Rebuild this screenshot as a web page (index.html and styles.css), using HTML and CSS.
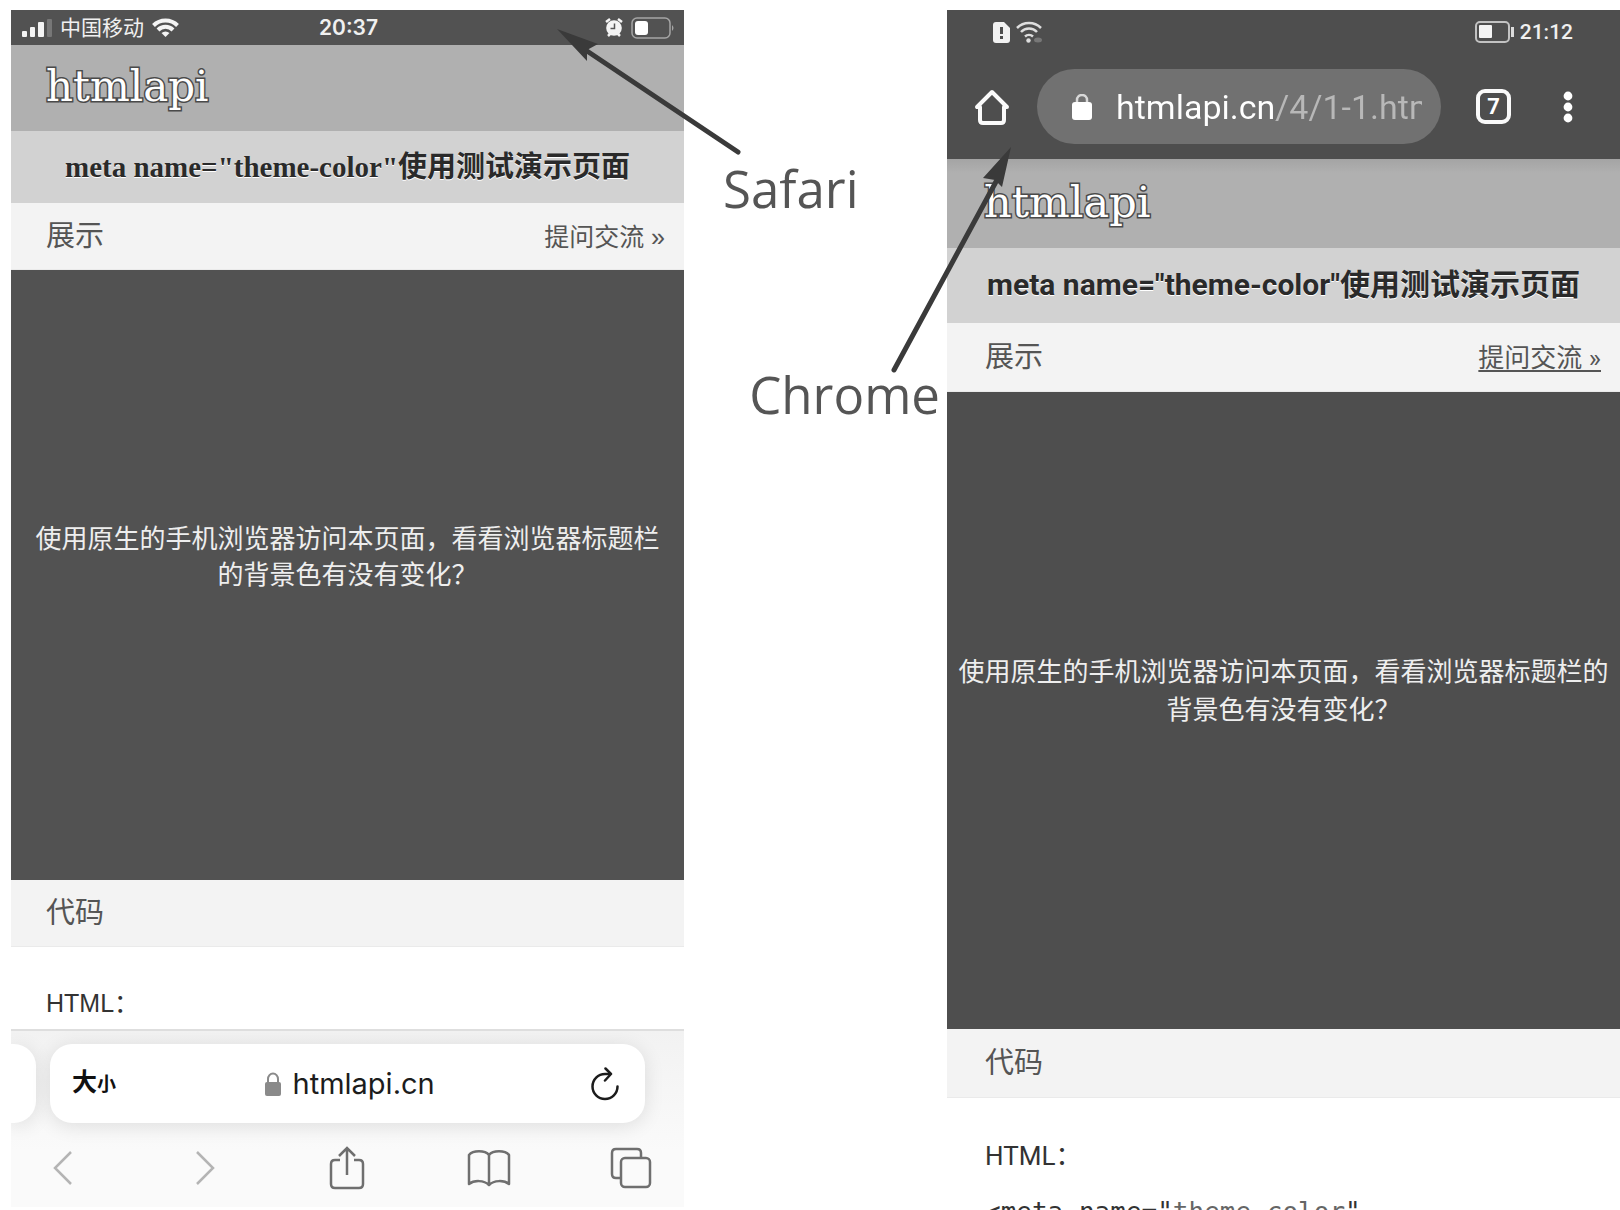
FILE: index.html
```html
<!DOCTYPE html>
<html lang="zh-CN">
<head>
    <meta charset="UTF-8">
    <title>meta name="theme-color"使用测试演示页面</title>
    <meta name="viewport" content="width=device-width, initial-scale=1">
    <link rel="stylesheet" href="styles.css">
</head>
<body>
    <main class="compare">
        <!-- Safari on iOS -->
        <section class="phone safari">
            <div class="status">
                <div class="status-side">
                    <svg width="30" height="18" viewBox="0 0 30 18" fill="#f4f4f4">
                        <rect x="0" y="12" width="5" height="6" rx="1"/>
                        <rect x="8" y="8" width="5" height="10" rx="1"/>
                        <rect x="16" y="3" width="6" height="15" rx="1"/>
                        <rect x="25" y="0" width="5" height="18" rx="1" fill="#777"/>
                    </svg>
                    <span class="carrier">中国移动</span>
                    <svg width="27" height="19" viewBox="0 0 27 19" fill="none" stroke="#f4f4f4" stroke-width="4">
                        <path d="M1.500 7.500a17 17 0 0 1 24 0"/>
                        <path d="M6 12a10.500 10.500 0 0 1 15 0"/>
                        <path d="M13.500 19l-4-4a6 6 0 0 1 8 0z" fill="#f4f4f4" stroke="none"/>
                    </svg>
                </div>
                <time class="clock">20:37</time>
                <div class="status-side status-end">
                    <svg width="18" height="19" viewBox="0 0 18 19">
                        <path d="M1 4l4-3M17 4l-4-3M3 18l3-3M15 18l-3-3" stroke="#f4f4f4" stroke-width="2.500"/>
                        <circle cx="9" cy="10" r="7.800" fill="#f4f4f4"/>
                        <path d="M9.500 5.500v5h-4" fill="none" stroke="#555" stroke-width="1.500"/>
                    </svg>
                    <svg width="44" height="22" viewBox="0 0 44 22">
                        <rect x="1" y="1" width="38" height="20" rx="5" fill="none" stroke="#a5a5a5" stroke-width="1.500"/>
                        <rect x="4" y="4" width="13" height="14" rx="3" fill="#fff"/>
                        <path d="M41 8q3 3 0 6z" fill="#a5a5a5"/>
                    </svg>
                </div>
            </div>
            <header class="site-header"><a class="logo" href="#">htmlapi</a></header>
            <h1 class="title">meta name="theme-color"使用测试演示页面</h1>
            <div class="bar">
                <h2 class="bar-title">展示</h2>
                <a class="ask" href="#">提问交流 »</a>
            </div>
            <div class="demo">
                <p class="demo-text">使用原生的手机浏览器访问本页面，看看浏览器标题栏的背景色有没有变化？</p>
            </div>
            <div class="bar"><h2 class="bar-title">代码</h2></div>
            <div class="code"><p class="lang">HTML：</p></div>
            <footer class="safari-ui">
                <div class="tabs-strip">
                    <div class="prev-tab"></div>
                    <div class="address">
                        <button class="text-size" type="button"><span>大</span><small>小</small></button>
                        <label class="address-field">
                            <svg width="18" height="24" viewBox="0 0 18 24" role="img" aria-label="Address">
                                <path d="M4 11V7a5 5.500 0 0 1 10 0v4" fill="none" stroke="#8a8a8a" stroke-width="2"/>
                                <rect x="1" y="10" width="16" height="14" rx="2" fill="#8a8a8a"/>
                            </svg>
                            <input class="url" type="text" value="htmlapi.cn">
                        </label>
                        <button class="icon-button" type="button" aria-label="Reload">
                            <svg width="28" height="34" viewBox="0 0 28 34" fill="none" stroke="#1c1c1c" stroke-width="2.500" stroke-linecap="round" stroke-linejoin="round">
                                <path d="M26.500 19.500a12.500 12.500 0 1 1-12.500-12.500h5"/>
                                <path d="M14.500 1.500l5.500 5.500-6 6.500"/>
                            </svg>
                        </button>
                    </div>
                </div>
                <nav class="safari-nav">
                    <button class="icon-button" type="button" aria-label="Back">
                        <svg width="20" height="34" viewBox="0 0 20 34" fill="none" stroke="#b4b4b4" stroke-width="2.500"><path d="M18 1L2 17l16 16"/></svg>
                    </button>
                    <button class="icon-button" type="button" aria-label="Forward">
                        <svg width="20" height="34" viewBox="0 0 20 34" fill="none" stroke="#b4b4b4" stroke-width="2.500"><path d="M2 1l16 16L2 33"/></svg>
                    </button>
                    <button class="icon-button" type="button" aria-label="Share">
                        <svg width="36" height="44" viewBox="0 0 36 44" fill="none" stroke="#6f6f6f" stroke-width="2.500">
                            <path d="M11 14H6q-4 0-4 4v20q0 4 4 4h24q4 0 4-4V18q0-4-4-4h-5M18 29V2M10 10l8-8 8 8"/>
                        </svg>
                    </button>
                    <button class="icon-button" type="button" aria-label="Bookmarks">
                        <svg width="44" height="38" viewBox="0 0 44 38" fill="none" stroke="#6f6f6f" stroke-width="2.500" stroke-linejoin="round">
                            <path d="M22 36C17 31 7 31 2 35V6C6 1 18 1 22 6C26 1 38 1 42 6V35C37 31 27 31 22 36zM22 6v30"/>
                        </svg>
                    </button>
                    <button class="icon-button" type="button" aria-label="Tabs">
                        <svg width="42" height="42" viewBox="0 0 42 42" fill="none" stroke="#6f6f6f" stroke-width="2.500">
                            <path d="M11 31H6q-4 0-4-4V6q0-4 4-4h21q4 0 4 4v5"/>
                            <rect x="11" y="11" width="29" height="29" rx="4"/>
                        </svg>
                    </button>
                </nav>
            </footer>
        </section>

        <!-- Labels, each with an arrow to its browser chrome -->
        <aside class="notes">
            <p class="note note-safari">Safari</p>
            <p class="note note-chrome">Chrome</p>
            <svg class="arrows" width="600" height="400" viewBox="0 0 600 400">
                <g stroke="#3a3a3a" stroke-width="5" stroke-linecap="round">
                    <path d="M346 152L192 49"/>
                    <path d="M502 370L606 178"/>
                </g>
                <g fill="#3a3a3a">
                    <path d="M165 29L206 44L195 50L195 61Z"/>
                    <path d="M619 147L610 187L603 180L591 178Z"/>
                </g>
            </svg>
        </aside>

        <!-- Chrome on Android -->
        <section class="phone chrome">
            <div class="chrome-ui">
                <div class="status">
                    <div class="status-side">
                        <svg width="17" height="21" viewBox="0 0 17 21">
                            <path d="M3 0h8l6 6v12q0 3-3 3H3q-3 0-3-3V3q0-3 3-3z" fill="#f2f2f2"/>
                            <path d="M8.500 5v7M8.500 14v3" stroke="#4e4e4e" stroke-width="3"/>
                        </svg>
                        <svg width="26" height="22" viewBox="0 0 26 22" fill="none" stroke="#dedede" stroke-width="2.500">
                            <path d="M1 7a17 17 0 0 1 24 0M5 11a11 11 0 0 1 16 0M9 15.500a6 6 0 0 1 8 0"/>
                            <circle cx="12.500" cy="19.500" r="2.200" fill="#dedede" stroke="none"/>
                            <ellipse cx="22" cy="19" rx="4" ry="2.500" fill="#777" stroke="none"/>
                        </svg>
                    </div>
                    <div class="status-side status-end">
                        <svg width="39" height="22" viewBox="0 0 39 22">
                            <rect x="1" y="1" width="33" height="20" rx="4" fill="none" stroke="#c2c2c2" stroke-width="2"/>
                            <rect x="4" y="4" width="13" height="13" rx="1" fill="#f4f4f4"/>
                            <path d="M37.500 6v10" stroke="#dcdcdc" stroke-width="3"/>
                        </svg>
                        <time class="clock">21:12</time>
                    </div>
                </div>
                <div class="chrome-bar">
                    <button class="icon-button" type="button" aria-label="Home">
                        <svg width="36" height="36" viewBox="0 0 36 36" fill="none" stroke="#fafafa" stroke-width="4" stroke-linejoin="round">
                            <path d="M18 3L3 18h3v13q0 3 3 3h18q3 0 3-3V18h3z"/>
                        </svg>
                    </button>
                    <label class="omnibox">
                        <svg width="20" height="26" viewBox="0 0 20 26" role="img" aria-label="Address">
                            <path d="M5 10V6a5 5 0 0 1 10 0v4" fill="none" stroke="#d8d8d8" stroke-width="2.500"/>
                            <rect x="0" y="8" width="20" height="18" rx="3" fill="#fff"/>
                        </svg>
                        <input class="url" type="text" value="htmlapi.cn/4/1-1.html">
                    </label>
                    <button class="tab-count" type="button">7</button>
                    <button class="icon-button" type="button" aria-label="Menu">
                        <svg width="10" height="32" viewBox="0 0 10 32" fill="#fff">
                            <circle cx="5" cy="5" r="4.400"/><circle cx="5" cy="16" r="4.400"/><circle cx="5" cy="27" r="4.400"/>
                        </svg>
                    </button>
                </div>
            </div>
            <header class="site-header"><a class="logo" href="#">htmlapi</a></header>
            <h1 class="title">meta name="theme-color"使用测试演示页面</h1>
            <div class="bar">
                <h2 class="bar-title">展示</h2>
                <a class="ask" href="#">提问交流 »</a>
            </div>
            <div class="demo">
                <p class="demo-text">使用原生的手机浏览器访问本页面，看看浏览器标题栏的背景色有没有变化？</p>
            </div>
            <div class="bar"><h2 class="bar-title">代码</h2></div>
            <div class="code">
                <p class="lang">HTML：</p>
                <pre class="snippet">&lt;meta name="<span>theme-color</span>"</pre>
            </div>
        </section>
    </main>
</body>
</html>
```
FILE: styles.css
```css
* { box-sizing: border-box; }
body { margin: 0; background: #fff; color: #333; font-family: "Liberation Sans", "Noto Sans CJK SC", sans-serif; }
h1, h2, p, pre { margin: 0; font-weight: normal; }
button { display: flex; align-items: center; justify-content: center; padding: 0; border: 0; background: none; color: inherit; font: inherit; cursor: pointer; }
input { min-width: 0; padding: 0; border: 0; outline: 0; background: none; font: inherit; }
svg { display: block; flex: none; }

.compare { display: grid; grid-template-columns: 1fr 263px 1fr; align-items: start; height: 100vh; padding: 10px 0 0 11px; overflow: hidden; }
.phone { min-width: 0; }
.chrome { font-family: Roboto, "Noto Sans CJK SC", sans-serif; }

/* status bars */
.status { display: flex; align-items: center; justify-content: space-between; color: #f0f0f0; font-size: 21px; line-height: 30px; }
.status-side { display: flex; flex: 1; align-items: center; gap: 8px; }
.status-end { justify-content: flex-end; }
.safari .status { height: 35px; padding: 0 9px 0 11px; background: #525252; }
.safari .clock { font-family: Inter, sans-serif; font-weight: 600; }
.chrome .status { height: 44px; padding: 0 47px 0 46px; }
.chrome .status-side { gap: 6px; }
.chrome .clock { font-weight: 500; }

/* demo page, shown in both phones */
.site-header { display: flex; align-items: center; height: 86px; padding: 0 35px 3px; background: #b0b0b0; }
.logo { color: #fff; font-family: "DejaVu Serif", serif; font-size: 42px; line-height: 50px; text-decoration: none; -webkit-text-stroke: 3px #4a4a4a; paint-order: stroke fill; }
.title { padding: 16px 0; background: #d2d2d2; color: #2a2a2a; font-family: "Liberation Serif", "Noto Sans CJK SC", serif; font-size: 29px; font-weight: bold; line-height: 40px; text-align: center; text-shadow: 0 1px #fff; white-space: nowrap; }
.bar { display: flex; align-items: center; justify-content: space-between; height: 67px; padding: 0 19px 0 35px; border-bottom: 1px solid #eaeaea; background: #f3f3f3; }
.bar-title { color: #555; font-size: 29px; line-height: 40px; }
.ask { padding-top: 2px; color: #555; font-size: 25px; line-height: 36px; text-decoration: none; }
.demo { display: flex; align-items: center; justify-content: center; min-height: 610px; padding: 0 20px 36px; background: #525252; }
.demo-text { color: #eee; font-size: 26px; line-height: 36px; text-align: center; }
.code { padding: 36px 35px 0; color: #333; }
.lang { font-size: 25px; line-height: 40px; }
.safari .code { height: 82px; }

.chrome .site-header { height: 89px; padding-left: 37px; background: linear-gradient(#a4a4a4, #b0b0b0 14px); }
.chrome .logo { font-size: 43px; }
.chrome .title { padding: 17px 0 18px; font-family: inherit; font-size: 30px; }
.chrome .bar { height: 69px; padding-left: 38px; }
.chrome .ask { font-size: 26px; text-decoration: underline; text-underline-offset: 3px; }
.chrome .demo { min-height: 637px; padding: 0 8px 40px; background: #4e4e4e; }
.chrome .demo-text { line-height: 38px; }
.chrome .code { padding: 38px 38px 0; }
.chrome .lang { font-size: 26px; }
.snippet { margin-top: 18px; font-family: "DejaVu Sans Mono", monospace; font-size: 26px; line-height: 36px; }
.snippet span { color: #666; }

/* Safari bottom toolbar */
.safari-ui { height: 178px; padding-top: 13px; border-top: 2px solid #dedede; background: linear-gradient(#f2f2f2, #fafafa 120px); overflow: hidden; }
.tabs-strip { display: flex; gap: 14px; padding-right: 39px; }
.prev-tab { width: 25px; border-radius: 0 22px 22px 0; background: #fff; box-shadow: 0 3px 20px rgba(0, 0, 0, .11); }
.address { display: flex; flex: 1; align-items: center; justify-content: space-between; height: 79px; padding: 0 18px 0 22px; border-radius: 22px; background: #fff; box-shadow: 0 3px 20px rgba(0, 0, 0, .11); }
.text-size { align-items: baseline; color: #111; font-size: 25px; font-weight: bold; line-height: 36px; }
.text-size small { font-size: 19px; }
.address-field { display: flex; align-items: center; gap: 11px; }
.address-field .url { width: 143px; color: #1c1c1c; font-family: Inter, sans-serif; font-size: 29px; line-height: 36px; }
.icon-button { min-width: 44px; height: 44px; }
.safari-nav { display: flex; justify-content: space-between; padding: 23px 31px 0 30px; }

/* Chrome top toolbar */
.chrome-ui { background: #4e4e4e; }
.chrome-bar { display: flex; align-items: center; padding: 15px 30px 15px 23px; }
.omnibox { display: flex; flex: 1; align-items: center; gap: 24px; min-width: 0; height: 75px; margin: 0 35px 0 23px; padding: 0 19px 0 35px; border-radius: 38px; background: #717171; }
.omnibox .url { flex: 1; background: linear-gradient(to right, #fff 160px, #b8b8b8 160px); background-clip: text; -webkit-background-clip: text; color: transparent; font-size: 34px; line-height: 44px; }
.tab-count { flex: none; width: 35px; height: 35px; margin-right: 35px; border: 4px solid #fafafa; border-radius: 9px; color: #fff; font-size: 22px; font-weight: bold; line-height: 24px; }

/* labels between the phones */
.notes { position: relative; z-index: 1; padding: 144px 7px 0 39px; color: #555; font-family: "Open Sans", sans-serif; }
.note { font-size: 51px; line-height: 68px; }
.note-chrome { margin-top: 138px; text-align: right; }
.arrows { position: absolute; top: -10px; left: -292px; overflow: visible; pointer-events: none; }
```
